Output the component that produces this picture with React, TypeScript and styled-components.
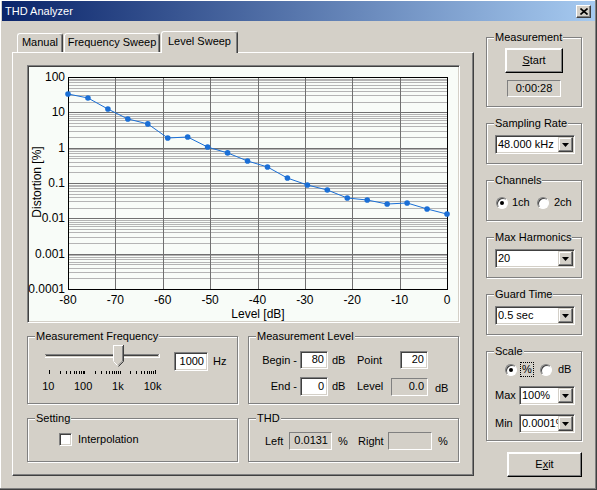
import React from 'react'
import styled, { createGlobalStyle, css } from 'styled-components'

const face = '#D4D0C8'

const GlobalStyle = createGlobalStyle`
  body {
    margin: 0;
    background: ${face};
    font-family: "Liberation Sans", Arial, sans-serif;
    font-size: 11px;
    color: #000;
  }
`

const raised = css`
  border: 1px solid;
  border-color: #fff #404040 #404040 #fff;
  box-shadow: inset -1px -1px #808080;
`

const sunken = css`
  border: 1px solid;
  border-color: #808080 #fff #fff #808080;
  box-shadow: inset 1px 1px #404040, inset -1px -1px ${face};
`

const shallow = css`
  border: 1px solid;
  border-color: #808080 #fff #fff #808080;
`

const Window = styled.div`
  width: 597px;
  height: 490px;
  box-sizing: border-box;
  padding: 1px 2px 0;
  background: ${face};
  box-shadow: inset -1px -1px #404040, inset -2px -2px #808080, inset 1px 1px #fff;
`

const TitleBar = styled.div`
  height: 20px;
  display: flex;
  align-items: center;
  padding: 0 4px 0 3px;
  background: linear-gradient(to right, #0a246a, #a6caf0);
  color: #fff;
`

const Title = styled.span`
  flex: 1;
  line-height: 13px;
`

const CloseButton = styled.div`
  width: 15px;
  height: 13px;
  box-sizing: border-box;
  background: ${face};
  display: flex;
  align-items: center;
  justify-content: center;
  ${raised};
`

const Body = styled.div`
  display: flex;
  align-items: flex-start;
  padding: 10px 0 0 10px;
`

const TabArea = styled.div`
  width: 462px;
`

const TabList = styled.div`
  display: flex;
  align-items: flex-end;
  height: 21px;
  padding-left: 5px;
`

const Tab = styled.div<{ $active?: boolean; $w: number }>`
  position: relative;
  z-index: ${p => (p.$active ? 1 : 0)};
  box-sizing: border-box;
  width: ${p => p.$w}px;
  height: ${p => (p.$active ? 22 : 19)}px;
  margin-right: 1px;
  margin-bottom: ${p => (p.$active ? -1 : 0)}px;
  padding-top: ${p => (p.$active ? 3 : 2)}px;
  background: ${face};
  border-top: 1px solid #fff;
  border-left: 1px solid #fff;
  border-right: 1px solid #404040;
  box-shadow: inset -1px 0 #808080;
  border-radius: 3px 3px 0 0;
  text-align: center;
  line-height: 13px;
  white-space: nowrap;
`

const TabPanel = styled.div`
  width: 462px;
  height: 424px;
  box-sizing: border-box;
  border-top: 1px solid #fff;
  border-left: 1px solid #fff;
  border-right: 1px solid #404040;
  border-bottom: 1px solid #404040;
  box-shadow: inset -1px -1px #808080;
  padding: 12px 0 0 14px;
`

const ChartBox = styled.div`
  width: 433px;
  height: 258px;
  box-sizing: border-box;
  background: #f8fcf8;
  ${sunken};

  svg {
    display: block;
  }
`

const GroupGrid = styled.div`
  display: grid;
  grid-template-columns: 211px 211px;
  grid-template-rows: 68px 44px;
  column-gap: 10px;
  row-gap: 14px;
  margin-top: 13px;
`

const Group = styled.div<{ $h?: number; $pad?: string }>`
  position: relative;
  box-sizing: border-box;
  ${p => p.$h && `height: ${p.$h}px;`}
  padding: ${p => p.$pad || '0'};
  border: 1px solid #808080;
  box-shadow: inset 1px 1px #fff, 1px 1px #fff;
`

const Legend = styled.span`
  position: absolute;
  top: -7px;
  left: 7px;
  padding: 0 1px;
  background: ${face};
  line-height: 13px;
  white-space: nowrap;
`

const Row = styled.div<{ $mt?: number; $ml?: number; $gap?: number }>`
  display: flex;
  align-items: center;
  margin-top: ${p => p.$mt || 0}px;
  margin-left: ${p => p.$ml || 0}px;
  gap: ${p => p.$gap || 0}px;
  line-height: 13px;
  white-space: nowrap;
`

const SliderCol = styled.div`
  width: 135px;

  svg {
    display: block;
  }
`

const SliderLabels = styled.div`
  display: flex;
  margin: 3px 0 0 -4px;
  line-height: 13px;
`

const SliderLabel = styled.span`
  width: 35px;
  text-align: center;
`

const TextBox = styled.div<{ $w: number; $h?: number; $ro?: boolean }>`
  box-sizing: border-box;
  width: ${p => p.$w}px;
  height: ${p => p.$h || 19}px;
  padding-right: 3px;
  text-align: right;
  line-height: ${p => (p.$h || 19) - 3}px;
  white-space: nowrap;
  overflow: hidden;
  background: ${p => (p.$ro ? face : '#fff')};
  ${p => (p.$ro ? shallow : sunken)};
`

const CheckBox = styled.span`
  width: 13px;
  height: 13px;
  box-sizing: border-box;
  background: #fff;
  ${sunken};
`

const LevelGrid = styled.div`
  display: grid;
  grid-template-columns: 50px 28px 29px 34px 37px auto;
  grid-template-rows: 18px 19px;
  row-gap: 8px;
  align-items: center;
  line-height: 13px;
  white-space: nowrap;
`

const GridLabel = styled.span<{ $right?: boolean; $pl?: number; $dy?: number }>`
  text-align: ${p => (p.$right ? 'right' : 'left')};
  padding-right: ${p => (p.$right ? 3 : 0)}px;
  padding-left: ${p => p.$pl || 0}px;
  position: relative;
  top: ${p => p.$dy || 0}px;
`

const CellEnd = styled.div`
  justify-self: end;
`

const ThdGrid = styled.div`
  display: grid;
  grid-template-columns: 24px 43px 26px 30px 44px auto;
  align-items: center;
  line-height: 13px;
`

const Side = styled.div`
  width: 96px;
  margin: 6px 0 0 12px;
  display: flex;
  flex-direction: column;
`

const GroupStack = styled.div`
  display: flex;
  flex-direction: column;
  gap: 16px;
`

const MeasureBody = styled.div`
  display: flex;
  flex-direction: column;
  align-items: center;
`

const Button = styled.div<{ $w: number }>`
  box-sizing: border-box;
  width: ${p => p.$w}px;
  height: 25px;
  background: ${face};
  text-align: center;
  line-height: 22px;
  ${raised};
  box-shadow: inset -1px -1px #808080, inset 1px 1px #fff;
  border-color: #fff #000 #000 #fff;
`

const ExitButton = styled(Button)`
  align-self: flex-end;
  margin-top: 11px;
`

const Timer = styled.div`
  box-sizing: border-box;
  width: 54px;
  height: 17px;
  margin-top: 7px;
  text-align: center;
  line-height: 15px;
  ${shallow};
`

const Combo = styled.div<{ $w: number }>`
  display: flex;
  box-sizing: border-box;
  width: ${p => p.$w}px;
  height: 19px;
  background: #fff;
  ${sunken};
`

const ComboText = styled.span`
  flex: 1;
  min-width: 0;
  padding-left: 2px;
  line-height: 17px;
  white-space: nowrap;
  overflow: hidden;
`

const ComboButton = styled.span`
  flex: none;
  box-sizing: border-box;
  width: 15px;
  height: 15px;
  margin: 1px 1px 1px 0;
  background: ${face};
  display: flex;
  align-items: center;
  justify-content: center;
  ${raised};
  box-shadow: inset -1px -1px #808080, inset 1px 1px #fff;
  border-color: ${face} #404040 #404040 ${face};
`

const Radio = styled.span<{ $on?: boolean }>`
  position: relative;
  flex: none;
  width: 12px;
  height: 12px;
  box-sizing: border-box;
  border-radius: 50%;
  background: #fff;
  border: 1px solid;
  border-color: #808080 #fff #fff #808080;
  box-shadow: inset 1px 1px #404040;

  &::after {
    content: '';
    display: ${p => (p.$on ? 'block' : 'none')};
    position: absolute;
    left: 3px;
    top: 3px;
    width: 4px;
    height: 4px;
    border-radius: 50%;
    background: #000;
  }
`

const RadioItem = styled.span<{ $w?: number; $gap?: number }>`
  display: flex;
  align-items: center;
  gap: ${p => p.$gap || 4}px;
  ${p => p.$w && `width: ${p.$w}px;`}
`

const Focus = styled.span`
  outline: 1px dotted #000;
  outline-offset: 0;
  padding: 0 1px;
`

const FieldLabel = styled.span<{ $w: number }>`
  width: ${p => p.$w}px;
`

/* ---------- chart ---------- */

const PL = 40
const PR = 419
const PT = 11
const PB = 223
const xs = (db: number) => PL + ((db + 80) / 80) * (PR - PL)
const ys = (v: number) => PT + ((2 - Math.log10(v)) / 6) * (PB - PT)
const px = (n: number) => Math.round(n) + 0.5

const data = [
  33, 25.5, 12.4, 6.5, 4.7, 1.88, 2.0, 1.04, 0.71, 0.42, 0.284, 0.138, 0.0877, 0.0634,
  0.0376, 0.033, 0.0254, 0.0272, 0.0184, 0.0132,
]

const yLabels = ['100', '10', '1', '0.1', '0.01', '0.001', '0.0001']

const Chart: React.FC = () => {
  const minor: number[] = []
  for (let e = -4; e < 2; e++) {
    for (let m = 2; m <= 9; m++) minor.push(ys(m * Math.pow(10, e)))
  }
  const pts = data.map((v, i) => [xs(-80 + (i * 80) / 19), ys(v)])
  return (
    <svg width={431} height={256} fontFamily='"Liberation Sans", Arial, sans-serif' fontSize={12}>
      <g shapeRendering="crispEdges">
        {minor.map((y, i) => (
          <line key={i} x1={PL} x2={PR} y1={px(y)} y2={px(y)} stroke="#b4b4b4" />
        ))}
        {yLabels.map((_, i) => (
          <line key={i} x1={PL} x2={PR} y1={px(ys(100 / Math.pow(10, i)))} y2={px(ys(100 / Math.pow(10, i)))} stroke="#707070" />
        ))}
        {[-70, -60, -50, -40, -30, -20, -10].map(d => (
          <line key={d} x1={px(xs(d))} x2={px(xs(d))} y1={PT} y2={PB} stroke="#707070" />
        ))}
        <rect x={PL + 0.5} y={PT + 0.5} width={PR - PL} height={PB - PT} fill="none" stroke="#000" />
      </g>
      {yLabels.map((t, i) => (
        <text key={t} x={37} y={ys(100 / Math.pow(10, i)) + 4} textAnchor="end">
          {t}
        </text>
      ))}
      {[-80, -70, -60, -50, -40, -30, -20, -10, 0].map(d => (
        <text key={d} x={xs(d)} y={238} textAnchor="middle">
          {d}
        </text>
      ))}
      <text x={230} y={252} textAnchor="middle">
        Level [dB]
      </text>
      <text transform="translate(13 116) rotate(-90)" textAnchor="middle">
        Distortion [%]
      </text>
      <polyline points={pts.map(p => p.join(',')).join(' ')} fill="none" stroke="#1a6fd6" strokeWidth={1} />
      {pts.map(([x, y], i) => (
        <circle key={i} cx={x} cy={y} r={2.8} fill="#1a6fd6" />
      ))}
    </svg>
  )
}

/* ---------- slider ---------- */

const Slider: React.FC = () => {
  const ticks: { x: number; big: boolean }[] = []
  for (let e = 1; e <= 4; e++) {
    const top = e === 4 ? 1 : 9
    for (let m = 1; m <= top; m++) {
      ticks.push({ x: 14 + 35.3 * Math.log10((m * Math.pow(10, e)) / 10), big: (e === 1 && m === 1) || e === 4 })
    }
  }
  return (
    <svg width={135} height={34} shapeRendering="crispEdges">
      <line x1={10} x2={124} y1={11.5} y2={11.5} stroke="#808080" />
      <line x1={11} x2={123} y1={12.5} y2={12.5} stroke="#404040" />
      <line x1={10} x2={124} y1={14.5} y2={14.5} stroke="#fff" />
      <line x1={124.5} x2={124.5} y1={11} y2={15} stroke="#fff" />
      <polygon points="78,2 88,2 88,18 83,23 78,18" fill={face} />
      <polyline points="78.5,18 78.5,2.5 88,2.5" fill="none" stroke="#fff" />
      <polyline points="88.5,2 88.5,18.5 83.5,23.5" fill="none" stroke="#404040" shapeRendering="auto" />
      <polyline points="87.5,3 87.5,18 83,22.5" fill="none" stroke="#808080" shapeRendering="auto" />
      <line x1={78.5} y1={18.5} x2={82.5} y2={22.5} stroke="#fff" shapeRendering="auto" />
      {ticks.map((t, i) => (
        <line key={i} x1={Math.round(t.x) + 0.5} x2={Math.round(t.x) + 0.5} y1={t.big ? 27 : 28} y2={31} stroke="#000" />
      ))}
    </svg>
  )
}

const DropArrow: React.FC = () => (
  <svg width={7} height={4}>
    <polygon points="0,0 7,0 3.5,4" fill="#000" />
  </svg>
)

const ComboBox: React.FC<{ w: number; value: string }> = ({ w, value }) => (
  <Combo $w={w}>
    <ComboText>{value}</ComboText>
    <ComboButton>
      <DropArrow />
    </ComboButton>
  </Combo>
)

const App: React.FC = () => {
  return (
    <>
      <GlobalStyle />
      <Window>
        <TitleBar>
          <Title>THD Analyzer</Title>
          <CloseButton>
            <svg width={8} height={7}>
              <path d="M0.5 0.5 L7.5 6.5 M7.5 0.5 L0.5 6.5" stroke="#000" strokeWidth={1.6} />
            </svg>
          </CloseButton>
        </TitleBar>
        <Body>
          <TabArea>
            <TabList>
              <Tab $w={46}>Manual</Tab>
              <Tab $w={96}>Frequency Sweep</Tab>
              <Tab $w={77} $active>
                Level Sweep
              </Tab>
            </TabList>
            <TabPanel>
              <ChartBox>
                <Chart />
              </ChartBox>
              <GroupGrid>
                <Group $pad="6px 0 0 7px">
                  <Legend>Measurement Frequency</Legend>
                  <Row style={{ alignItems: 'flex-start' }}>
                    <SliderCol>
                      <Slider />
                      <SliderLabels>
                        <SliderLabel>10</SliderLabel>
                        <SliderLabel>100</SliderLabel>
                        <SliderLabel>1k</SliderLabel>
                        <SliderLabel>10k</SliderLabel>
                      </SliderLabels>
                    </SliderCol>
                    <Row $mt={9} $ml={4} $gap={5}>
                      <TextBox $w={34}>1000</TextBox>
                      <span>Hz</span>
                    </Row>
                  </Row>
                </Group>
                <Group $pad="14px 0 0 1px">
                  <Legend>Measurement Level</Legend>
                  <LevelGrid>
                    <GridLabel $right>Begin -</GridLabel>
                    <TextBox $w={28} $h={18}>80</TextBox>
                    <GridLabel $pl={4}>dB</GridLabel>
                    <GridLabel>Point</GridLabel>
                    <CellEnd>
                      <TextBox $w={28} $h={18}>20</TextBox>
                    </CellEnd>
                    <span />
                    <GridLabel $right>End -</GridLabel>
                    <TextBox $w={28}>0</TextBox>
                    <GridLabel $pl={4}>dB</GridLabel>
                    <GridLabel>Level</GridLabel>
                    <CellEnd>
                      <TextBox $w={37} $h={18} $ro>
                        0.0
                      </TextBox>
                    </CellEnd>
                    <GridLabel $pl={7} $dy={2}>
                      dB
                    </GridLabel>
                  </LevelGrid>
                </Group>
                <Group $pad="14px 0 0 31px">
                  <Legend>Setting</Legend>
                  <Row $gap={6}>
                    <CheckBox />
                    <span>Interpolation</span>
                  </Row>
                </Group>
                <Group $pad="13px 0 0 16px">
                  <Legend>THD</Legend>
                  <ThdGrid>
                    <span>Left</span>
                    <TextBox $w={43} $h={18} $ro>
                      0.0131
                    </TextBox>
                    <GridLabel $pl={6}>%</GridLabel>
                    <span>Right</span>
                    <TextBox $w={44} $h={18} $ro />
                    <GridLabel $pl={6}>%</GridLabel>
                  </ThdGrid>
                </Group>
              </GroupGrid>
            </TabPanel>
          </TabArea>
          <Side>
            <GroupStack>
              <Group $h={70} $pad="10px 0 0 0">
                <Legend>Measurement</Legend>
                <MeasureBody>
                  <Button $w={58}>
                    <u>S</u>tart
                  </Button>
                  <Timer>0:00:28</Timer>
                </MeasureBody>
              </Group>
              <Group $h={41} $pad="11px 0 0 8px">
                <Legend>Sampling Rate</Legend>
                <ComboBox w={80} value="48.000 kHz" />
              </Group>
              <Group $h={41} $pad="15px 0 0 9px">
                <Legend>Channels</Legend>
                <Row>
                  <RadioItem $w={41}>
                    <Radio $on />
                    <span>1ch</span>
                  </RadioItem>
                  <RadioItem $gap={5}>
                    <Radio />
                    <span>2ch</span>
                  </RadioItem>
                </Row>
              </Group>
              <Group $h={41} $pad="11px 0 0 8px">
                <Legend>Max Harmonics</Legend>
                <ComboBox w={80} value="20" />
              </Group>
              <Group $h={41} $pad="11px 0 0 8px">
                <Legend>Guard Time</Legend>
                <ComboBox w={80} value="0.5 sec" />
              </Group>
              <Group $h={90} $pad="11px 0 0 8px">
                <Legend>Scale</Legend>
                <Row $ml={10}>
                  <RadioItem $w={35}>
                    <Radio $on />
                    <Focus>%</Focus>
                  </RadioItem>
                  <RadioItem $gap={6}>
                    <Radio />
                    <span>dB</span>
                  </RadioItem>
                </Row>
                <Row $mt={10}>
                  <FieldLabel $w={24}>Max</FieldLabel>
                  <ComboBox w={56} value="100%" />
                </Row>
                <Row $mt={9}>
                  <FieldLabel $w={24}>Min</FieldLabel>
                  <ComboBox w={56} value="0.0001%" />
                </Row>
              </Group>
            </GroupStack>
            <ExitButton $w={75}>
              E<u>x</u>it
            </ExitButton>
          </Side>
        </Body>
      </Window>
    </>
  )
}

export default App
